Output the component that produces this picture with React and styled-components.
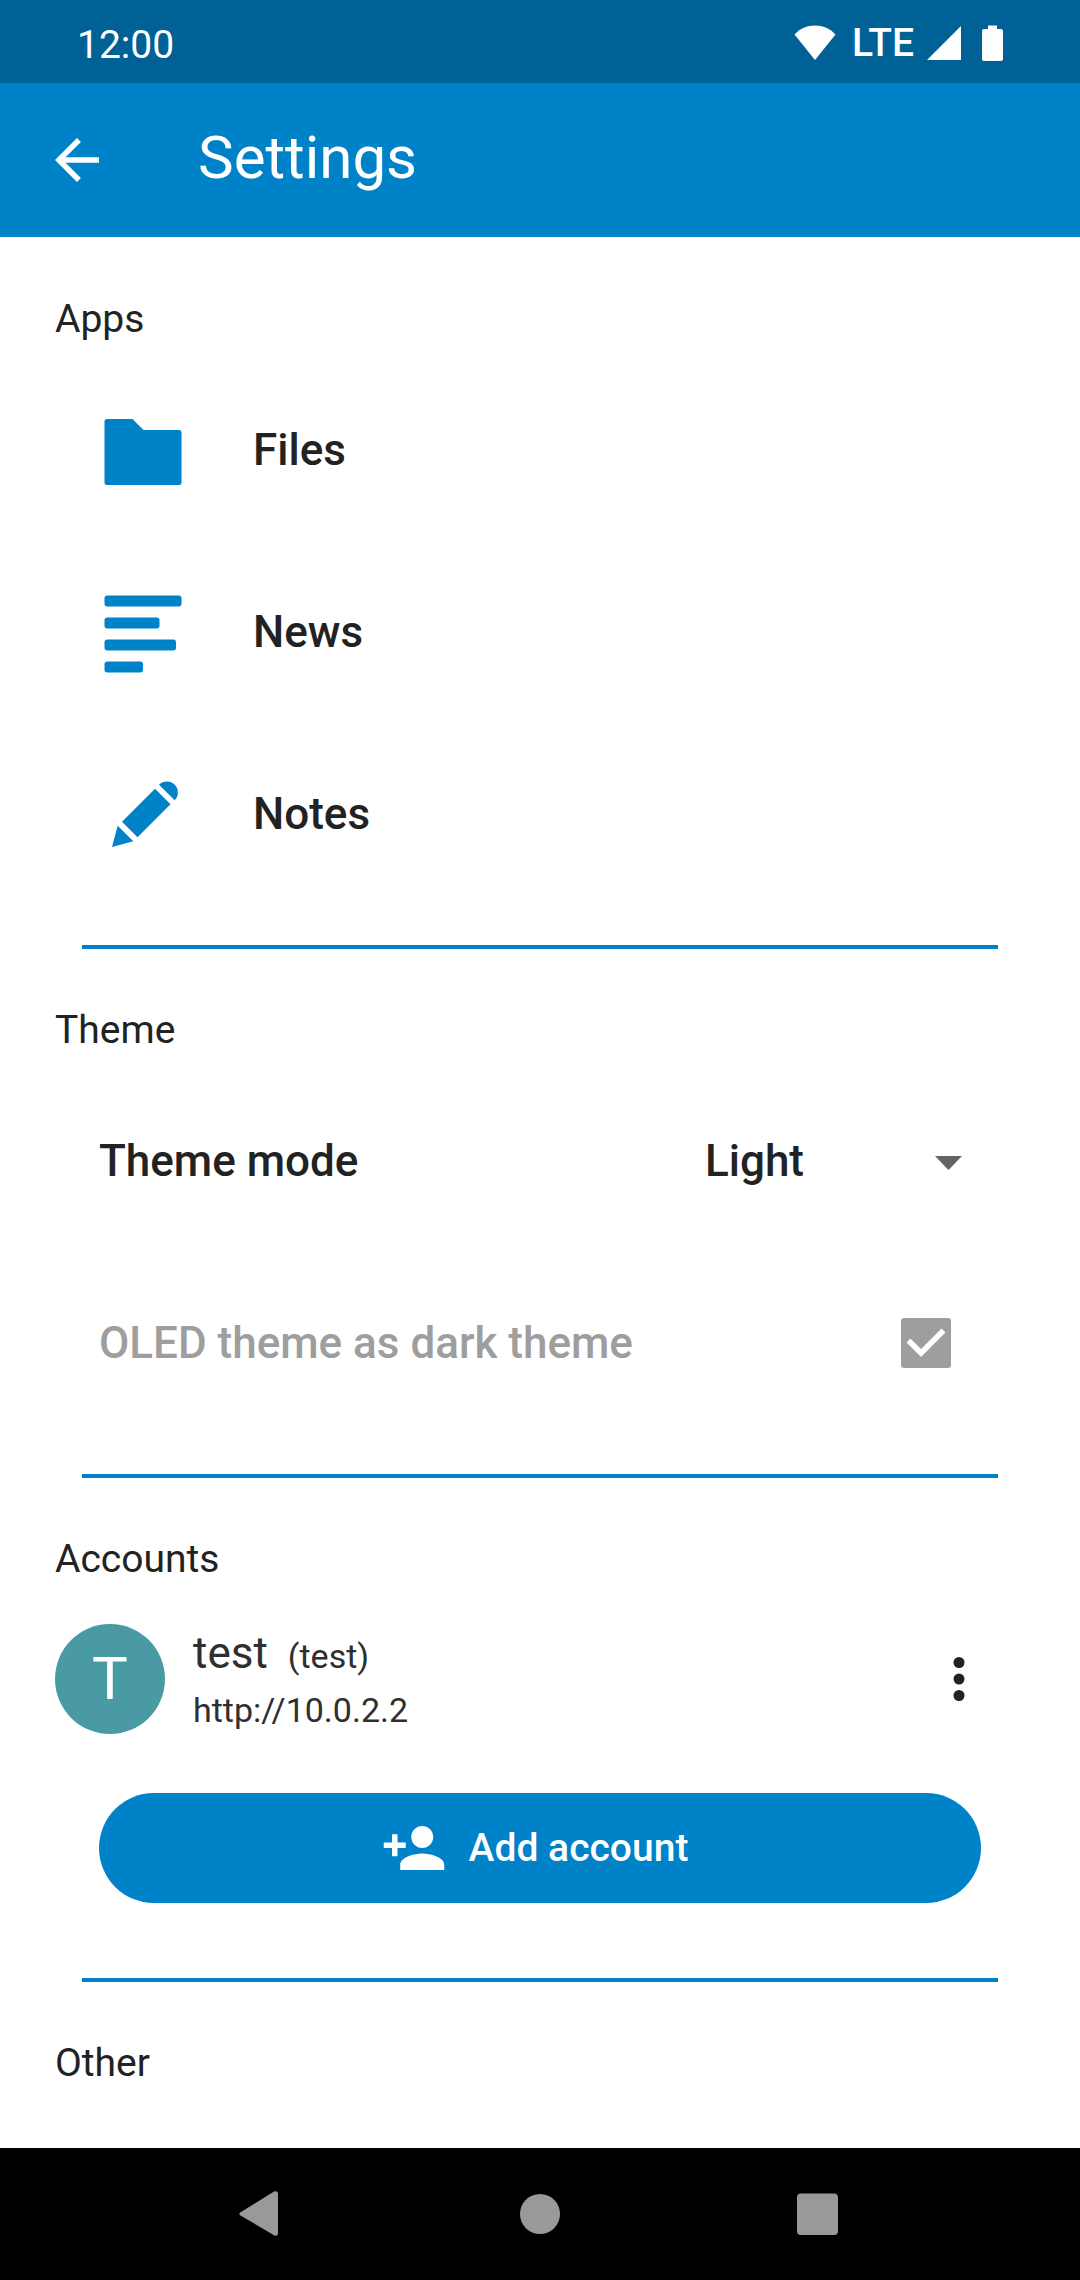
import React, { useState } from "react";
import styled, { createGlobalStyle } from "styled-components";

const color = {
  primary: "#0082c9",
  primaryDark: "#006197",
  text: "#222222",
  subText: "#2f2f2f",
  disabled: "#9e9e9e",
  surface: "#ffffff",
  avatar: "#4a9aa4",
  nav: "#999999",
};

const GlobalStyle = createGlobalStyle`
  *, *::before, *::after { box-sizing: border-box; }
  body {
    margin: 0;
    background: ${color.surface};
    color: ${color.text};
    font-family: Roboto, "Noto Sans", sans-serif;
  }
  button, select { font: inherit; color: inherit; }
`;

const Screen = styled.div`
  display: flex;
  flex-direction: column;
  min-height: 100vh;
`;

const StatusBar = styled.div`
  display: flex;
  align-items: center;
  justify-content: space-between;
  height: 83px;
  padding: 6px 70px 0 77px;
  background: ${color.primaryDark};
  color: #fff;
  font-size: 39px;
  line-height: 48px;
`;

const StatusIcons = styled.div`
  display: flex;
  align-items: center;
  gap: 12px;
  padding-bottom: 4px;
`;

const NetworkType = styled.span`
  padding-left: 4px;
  font-weight: 500;
`;

const AppBar = styled.header`
  display: flex;
  align-items: center;
  gap: 88px;
  height: 154px;
  padding: 0 44px;
  background: ${color.primary};
  color: #fff;
`;

const IconButton = styled.button`
  display: flex;
  padding: 0;
  border: 0;
  background: none;
  cursor: pointer;
`;

const PageTitle = styled.h1`
  margin: 0;
  padding-bottom: 4px;
  font-size: 60px;
  font-weight: 400;
  line-height: 72px;
`;

const Content = styled.main`
  flex: 1;
  padding-top: 1px;
`;

const Section = styled.section`
  padding-top: 53px;
`;

const SectionTitle = styled.h2`
  margin: 0 55px 14px;
  font-size: 39px;
  font-weight: 400;
  line-height: 56px;
`;

const Divider = styled.hr`
  height: 4px;
  margin: ${(p) => p.$gap}px 82px 0;
  border: 0;
  background: ${color.primary};
`;

const Row = styled.div`
  display: flex;
  align-items: center;
  height: 182px;
  padding: 0 99px;
`;

const AppRow = styled(Row).attrs({ as: "button", type: "button" })`
  width: 100%;
  gap: 66px;
  border: 0;
  background: none;
  text-align: left;
  cursor: pointer;
`;

const RowText = styled.span`
  padding-bottom: 4px;
  font-size: 44px;
  font-weight: 500;
  line-height: 56px;
`;

const RowLabel = styled(RowText).attrs({ as: "label" })`
  flex: 1;
  color: ${(p) => (p.$disabled ? color.disabled : "inherit")};
`;

const Stack = styled.span`
  display: grid;
  align-items: center;
  & > * { grid-area: 1 / 1; }
  & > svg { justify-self: end; pointer-events: none; }
`;

const SelectBox = styled(Stack)`
  width: 276px;
  padding-right: 19px;
`;

const Select = styled.select`
  width: 100%;
  height: 60px;
  padding: 0 0 4px;
  border: 0;
  appearance: none;
  background: none;
  font-size: 44px;
  font-weight: 500;
  line-height: 56px;
`;

const CheckBox = styled(Stack)`
  margin-right: 30px;
  padding-bottom: 4px;
`;

const CheckInput = styled.input`
  width: 50px;
  height: 50px;
  margin: 0;
  border-radius: 3px;
  appearance: none;
  background: ${color.disabled};
`;

const AccountRow = styled.div`
  display: flex;
  align-items: center;
  gap: 28px;
  padding: 19px 88px 24px 55px;
`;

const Avatar = styled.span`
  display: flex;
  align-items: center;
  justify-content: center;
  width: 110px;
  height: 110px;
  border-radius: 50%;
  background: ${color.avatar};
  color: #fff;
  font-size: 60px;
`;

const AccountInfo = styled.div`
  flex: 1;
  padding-top: 6px;
  color: ${color.subText};
  font-size: 34px;
  line-height: 54px;
`;

const AccountName = styled.div`
  display: flex;
  align-items: baseline;
  gap: 20px;
`;

const DisplayName = styled.span`
  font-size: 44px;
`;

const AddButton = styled.button`
  display: flex;
  align-items: center;
  justify-content: center;
  gap: 22px;
  width: calc(100% - 198px);
  height: 110px;
  margin: 32px 99px 0;
  padding: 0 11px 0 0;
  border: 0;
  border-radius: 55px;
  background: ${color.primary};
  color: #fff;
  font-size: 39px;
  font-weight: 500;
  cursor: pointer;
`;

const NavBar = styled.nav`
  display: flex;
  justify-content: center;
  height: 132px;
  background: #000;
`;

const NavButton = styled(IconButton)`
  align-items: center;
  justify-content: center;
  width: 278px;
`;

const WifiIcon = () => (
  <svg width="42" height="36" viewBox="0 0 42 36" aria-hidden="true">
    <path fill="#fff" d="M0.5 9.500C6 3.500 13 0.500 21 0.500S36 3.500 41.500 9.500L21 35Z" />
  </svg>
);
const SignalIcon = () => (
  <svg width="36" height="36" viewBox="0 0 36 36" aria-hidden="true">
    <path fill="#fff" d="M1 35L35 1V35Z" />
  </svg>
);
const BatteryIcon = () => (
  <svg width="36" height="36" viewBox="0 0 36 36" aria-hidden="true">
    <path fill="#fff" d="M14 0.500H23V4H27Q29 4 29 6V34Q29 36 27 36H10Q8 36 8 34V6Q8 4 10 4H14Z" />
  </svg>
);
const BackIcon = () => (
  <svg width="66" height="66" viewBox="0 0 24 24" aria-hidden="true">
    <path fill="#fff" d="M20 11H7.830l5.590-5.590L12 4l-8 8 8 8 1.410-1.410L7.830 13H20v-2z" />
  </svg>
);

const FilesIcon = () => (
  <svg width="88" height="88" viewBox="0 0 88 88" aria-hidden="true">
    <path fill={color.primary} d="M8 11H33.500L44.500 22H80Q82.500 22 82.500 24.500V74.500Q82.500 77 80 77H8Q5.500 77 5.500 74.500V13.500Q5.500 11 8 11Z" />
  </svg>
);
const NewsIcon = () => (
  <svg width="88" height="88" viewBox="0 0 88 88" fill={color.primary} aria-hidden="true">
    <rect x="5.500" y="5.500" width="77" height="11" rx="2.750" />
    <rect x="5.500" y="27.500" width="55" height="11" rx="2.750" />
    <rect x="5.500" y="49.500" width="71.500" height="11" rx="2.750" />
    <rect x="5.500" y="71.500" width="38.500" height="11" rx="2.750" />
  </svg>
);
const NotesIcon = () => (
  <svg width="88" height="88" viewBox="0 0 88 88" fill={color.primary} aria-hidden="true">
    <path d="M13 75L18.700 53.700L34.300 69.300Z" />
    <path d="M23 49.700L56 16.700L71.500 32.300L38.500 65.200Z" />
    <path d="M60 12.700A11 11 0 0 1 75.700 28.200Z" />
  </svg>
);

const DropDownIcon = () => (
  <svg width="27" height="14" viewBox="0 0 27 14" aria-hidden="true">
    <path fill="#646464" d="M0 0H27L13.500 14Z" />
  </svg>
);
const CheckIcon = () => (
  <svg width="50" height="50" viewBox="0 0 50 50" aria-hidden="true">
    <path fill="none" stroke="#fff" strokeWidth="5.500" d="M7.500 22.500L20 35L42.500 12.500" />
  </svg>
);
const MoreIcon = () => (
  <svg width="66" height="66" viewBox="0 0 66 66" fill={color.text} aria-hidden="true">
    <circle cx="33" cy="16.500" r="5.500" />
    <circle cx="33" cy="33" r="5.500" />
    <circle cx="33" cy="49.500" r="5.500" />
  </svg>
);
const PersonAddIcon = () => (
  <svg width="66" height="66" viewBox="0 0 24 24" aria-hidden="true">
    <path fill="#fff" d="M15 12c2.210 0 4-1.790 4-4s-1.790-4-4-4-4 1.790-4 4 1.790 4 4 4zm-9-2V7H4v3H1v2h3v3h2v-3h3v-2H6zm9 4c-2.670 0-8 1.340-8 4v2h16v-2c0-2.660-5.330-4-8-4z" />
  </svg>
);

const NavBackIcon = () => (
  <svg width="48" height="48" viewBox="0 0 48 48" aria-hidden="true">
    <path fill={color.nav} d="M2.500 22.200L36 1.600Q40 0 40 4V43Q40 47 36 45.200L2.500 25.400Q0 23.800 2.500 22.200Z" />
  </svg>
);
const NavHomeIcon = () => (
  <svg width="48" height="48" viewBox="0 0 48 48" aria-hidden="true">
    <circle cx="24" cy="24" r="20" fill={color.nav} />
  </svg>
);
const NavRecentIcon = () => (
  <svg width="48" height="48" viewBox="0 0 48 48" aria-hidden="true">
    <rect x="3" y="3.500" width="41" height="41.500" rx="4" fill={color.nav} />
  </svg>
);

const apps = [
  { name: "Files", Icon: FilesIcon },
  { name: "News", Icon: NewsIcon },
  { name: "Notes", Icon: NotesIcon },
];

export default function App() {
  const [mode, setMode] = useState("Light");
  return (
    <Screen>
      <GlobalStyle />
      <StatusBar>
        <span>12:00</span>
        <StatusIcons>
          <WifiIcon />
          <NetworkType>LTE</NetworkType>
          <SignalIcon />
          <BatteryIcon />
        </StatusIcons>
      </StatusBar>
      <AppBar>
        <IconButton type="button" aria-label="Back">
          <BackIcon />
        </IconButton>
        <PageTitle>Settings</PageTitle>
      </AppBar>
      <Content>
        <Section>
          <SectionTitle>Apps</SectionTitle>
          {apps.map(({ name, Icon }) => (
            <AppRow key={name}>
              <Icon />
              <RowText>{name}</RowText>
            </AppRow>
          ))}
          <Divider $gap={38} />
        </Section>
        <Section>
          <SectionTitle>Theme</SectionTitle>
          <Row>
            <RowLabel htmlFor="theme-mode">Theme mode</RowLabel>
            <SelectBox>
              <Select id="theme-mode" value={mode} onChange={(e) => setMode(e.target.value)}>
                <option>Light</option>
              </Select>
              <DropDownIcon />
            </SelectBox>
          </Row>
          <Row>
            <RowLabel htmlFor="oled" $disabled>OLED theme as dark theme</RowLabel>
            <CheckBox>
              <CheckInput id="oled" type="checkbox" defaultChecked disabled />
              <CheckIcon />
            </CheckBox>
          </Row>
          <Divider $gap={38} />
        </Section>
        <Section>
          <SectionTitle>Accounts</SectionTitle>
          <AccountRow>
            <Avatar>T</Avatar>
            <AccountInfo>
              <AccountName>
                <DisplayName>test</DisplayName>
                <span>(test)</span>
              </AccountName>
              <div>http://10.0.2.2</div>
            </AccountInfo>
            <IconButton type="button" aria-label="Account options">
              <MoreIcon />
            </IconButton>
          </AccountRow>
          <AddButton type="button">
            <PersonAddIcon />
            Add account
          </AddButton>
          <Divider $gap={75} />
        </Section>
        <Section>
          <SectionTitle>Other</SectionTitle>
        </Section>
      </Content>
      <NavBar>
        <NavButton type="button" aria-label="System back"><NavBackIcon /></NavButton>
        <NavButton type="button" aria-label="Home"><NavHomeIcon /></NavButton>
        <NavButton type="button" aria-label="Recent apps"><NavRecentIcon /></NavButton>
      </NavBar>
    </Screen>
  );
}
